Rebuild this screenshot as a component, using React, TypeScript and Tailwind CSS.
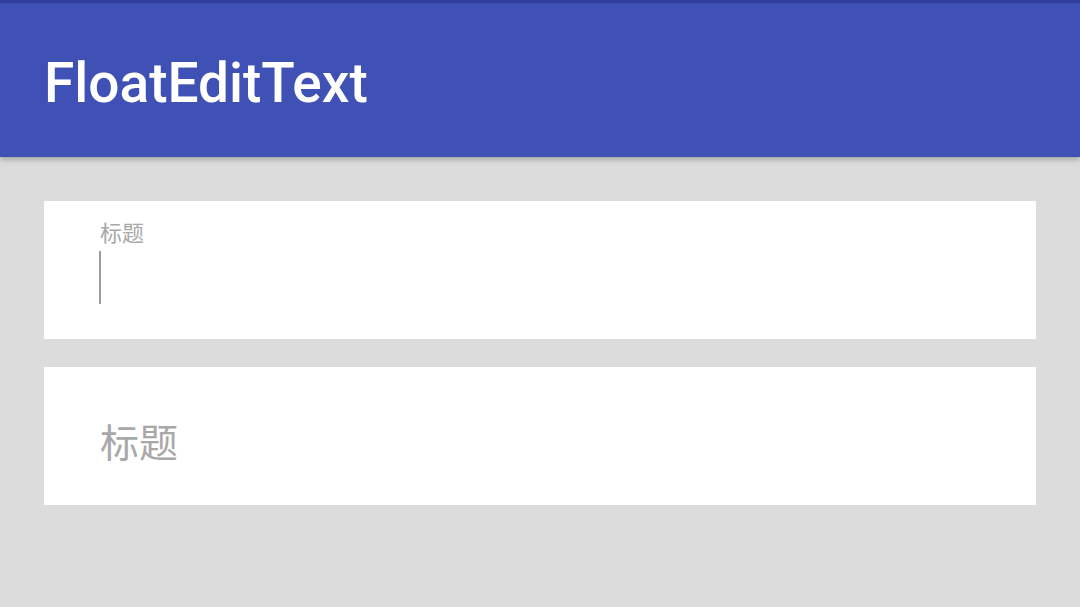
import React from "react";

function FloatField({ focused }: { focused: boolean }) {
  return (
    <div className="bg-white h-[138px] pl-[56px] flex flex-col">
      {focused ? (
        <>
          <p className="mt-[18px] text-[22px] leading-[30px] text-[#a8a8a8]">标题</p>
          <div className="mt-[2px] w-[2px] h-[53px] bg-[#9e9e9e] -ml-[1px]"></div>
        </>
      ) : (
        <p className="mt-[52px] text-[39px] leading-[50px] text-[#a8a8a8]">标题</p>
      )}
    </div>
  );
}

export default function App() {
  return (
    <div
      className="w-[1080px] h-[607px] bg-[#dcdcdc] flex flex-col overflow-hidden"
      style={{ fontFamily: 'Roboto, "Noto Sans CJK SC", sans-serif' }}
    >
      <div className="relative z-10 shadow-[0_2px_6px_rgba(0,0,0,0.3)]">
        <div className="h-[3px] bg-[#303f9f]"></div>
        <div className="h-[154px] bg-[#3f51b5] flex items-center pl-[44px]">
          <h1 className="text-white text-[55px] font-medium leading-none mt-[6px]">FloatEditText</h1>
        </div>
      </div>
      <div className="px-[44px] pt-[44px] flex flex-col gap-[28px]">
        <FloatField focused={true} />
        <FloatField focused={false} />
      </div>
    </div>
  );
}
